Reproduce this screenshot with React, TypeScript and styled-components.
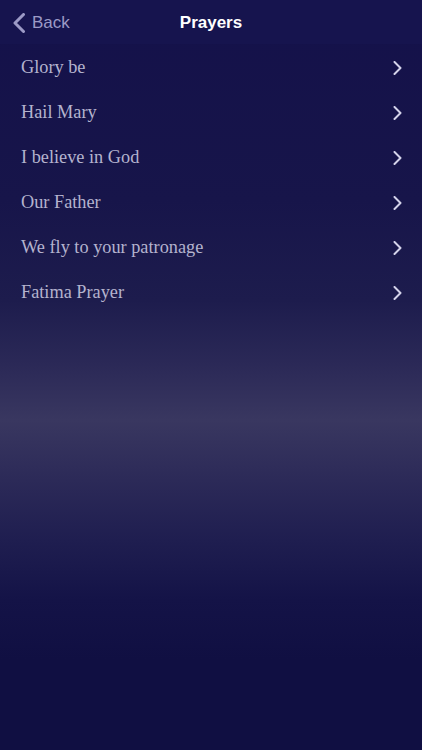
import React from 'react';
import styled, { createGlobalStyle } from 'styled-components';

const GlobalStyle = createGlobalStyle`
  html, body {
    margin: 0;
    padding: 0;
    background: #100f42;
  }
  * { box-sizing: border-box; }
`;

const Screen = styled.div`
  width: 422px;
  height: 750px;
  display: flex;
  flex-direction: column;
  overflow: hidden;
  background: linear-gradient(
    to bottom,
    #14114a 0px,
    #17154a 200px,
    #1d1c4d 300px,
    #2b2957 365px,
    #393760 420px,
    #2c2a58 480px,
    #1f1e50 540px,
    #141347 600px,
    #100f42 660px,
    #100f42 750px
  );
`;

const NavBar = styled.header`
  height: 44px;
  flex-shrink: 0;
  display: grid;
  grid-template-columns: 1fr auto 1fr;
  align-items: center;
  padding-top: 2px;
  background: #16144e;
  font-family: "Liberation Sans", Arial, sans-serif;
  font-size: 17px;
`;

const BackButton = styled.button`
  justify-self: start;
  display: flex;
  align-items: center;
  gap: 7px;
  padding: 0 0 0 13px;
  border: 0;
  background: none;
  color: #9c9ac6;
  font: inherit;
  cursor: pointer;
`;

const Title = styled.h1`
  margin: 0;
  font-size: 17px;
  font-weight: 700;
  color: #ffffff;
`;

const List = styled.ul`
  list-style: none;
  margin: 0;
  padding: 1px 0 0;
`;

const Row = styled.li`
  height: 45px;
  display: flex;
  align-items: center;
  justify-content: space-between;
  padding: 0 20px 0 21px;
  font-family: "Liberation Serif", "Times New Roman", serif;
  font-size: 18.3px;
  color: #b4b3ce;
  cursor: pointer;
`;

const Chevron = ({ color, w, h, stroke }: { color: string; w: number; h: number; stroke: number }) => (
  <svg width={w} height={h} viewBox={`0 0 ${w} ${h}`} fill="none">
    <polyline
      points={`${stroke / 2 + 0.5},${stroke / 2} ${w - stroke / 2 - 0.5},${h / 2} ${stroke / 2 + 0.5},${h - stroke / 2}`}
      stroke={color}
      strokeWidth={stroke}
      strokeLinecap="round"
      strokeLinejoin="round"
    />
  </svg>
);

const BackChevron = () => (
  <svg width={12} height={20} viewBox="0 0 12 20" fill="none">
    <polyline
      points="10.5,1.5 2,10 10.5,18.5"
      stroke="#9c9ac6"
      strokeWidth={3}
      strokeLinecap="round"
      strokeLinejoin="round"
    />
  </svg>
);

const prayers = [
  'Glory be',
  'Hail Mary',
  'I believe in God',
  'Our Father',
  'We fly to your patronage',
  'Fatima Prayer',
];

export default function App() {
  return (
    <>
      <GlobalStyle />
      <Screen>
        <NavBar>
          <BackButton>
            <BackChevron />
            Back
          </BackButton>
          <Title>Prayers</Title>
          <span />
        </NavBar>
        <List>
          {prayers.map((p) => (
            <Row key={p}>
              {p}
              <Chevron color="#d4d3ea" w={9} h={14} stroke={2} />
            </Row>
          ))}
        </List>
      </Screen>
    </>
  );
}
